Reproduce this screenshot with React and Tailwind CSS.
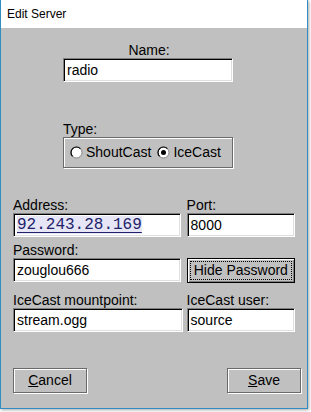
import React from 'react';

const sunken =
  'h-[24px] border border-t-[#808080] border-l-[#808080] border-b-white border-r-white bg-white shadow-[inset_1px_1px_0_#000,inset_-1px_-1px_0_#dfdfdf] px-[3px] flex items-center text-[14px] text-black';

const Label = ({ children, className = '' }) => (
  <div className={`h-4 leading-4 text-[14px] text-black ${className}`}>{children}</div>
);

const Radio = ({ checked }) => (
  <svg width="13" height="13" viewBox="0 0 13 13" className="shrink-0">
    <circle cx="6.5" cy="6.5" r="5.5" fill="#fff" stroke="#808080" strokeWidth="1" />
    <path d="M2.6 10.4 A5 5 0 0 1 10.4 2.6" fill="none" stroke="#000" strokeWidth="1.2" />
    {checked && <circle cx="6.5" cy="6.5" r="2.5" fill="#000" />}
  </svg>
);

const Button = ({ children, className = '' }) => (
  <button
    className={`h-[25px] w-[74px] border border-[#6a6a6a] shadow-[1px_1px_0_#fff,inset_1px_1px_0_#fff] bg-[#c0c0c0] text-[14px] text-black flex items-center justify-center ${className}`}
  >
    {children}
  </button>
);

export default function App() {
  return (
    <div className="w-[311px] h-[412px] bg-white font-['Liberation_Sans',Arial,sans-serif]">
      <div className="w-[308px] h-[409px] flex flex-col border-x border-b border-[#2f8dbf] shadow-[1px_1px_3px_rgba(0,0,0,0.35)]">
        {/* title bar */}
        <div className="h-[28px] bg-white flex items-center pl-[6px] text-[12px] text-black">
          Edit Server
        </div>

        <div className="flex-1 bg-[#c0c0c0] flex flex-col pt-[14px]">
          {/* name */}
          <div className="ml-[62px] w-[170px] flex flex-col">
            <Label className="text-center pl-[2px]">Name:</Label>
            <div className={sunken}>radio</div>
          </div>

          {/* type */}
          <div className="ml-[62px] w-[170px] mt-[39px] flex flex-col">
            <Label>Type:</Label>
            <div className="h-[31px] border border-[#6a6a6a] shadow-[1px_1px_0_#fff,inset_1px_1px_0_#fff] flex items-center pl-[6px] text-[14px] text-black">
              <Radio />
              <span className="ml-[3px]">ShoutCast</span>
              <span className="ml-[6px]"><Radio checked /></span>
              <span className="ml-[3px]">IceCast</span>
            </div>
          </div>

          {/* address / port */}
          <div className="px-[12px] mt-[29px] flex gap-[6px]">
            <div className="w-[170px] flex flex-col">
              <Label>Address:</Label>
              <div className={sunken}>
                <span className="bg-[#e6e6f6] text-[#22226a] underline underline-offset-[3px] font-['Liberation_Mono',monospace] text-[16px] leading-[18px]">
                  92.243.28.169
                </span>
              </div>
            </div>
            <div className="w-[110px] flex flex-col">
              <Label>Port:</Label>
              <div className={sunken}>8000</div>
            </div>
          </div>

          {/* password */}
          <div className="px-[12px] mt-[5px] flex flex-col">
            <Label>Password:</Label>
            <div className="flex gap-[6px] items-start">
              <div className={`w-[170px] ${sunken}`}>zouglou666</div>
              <button className="h-[25px] w-[110px] border border-black bg-[#c0c0c0] shadow-[inset_1px_1px_0_#fff,inset_-1px_-1px_0_#808080] outline-1 outline-dotted outline-black -outline-offset-4 text-[14px] text-black flex items-center justify-center">
                Hide Password
              </button>
            </div>
          </div>

          {/* icecast */}
          <div className="px-[12px] mt-[9px] flex gap-[4px]">
            <div className="w-[172px] flex flex-col">
              <Label>IceCast mountpoint:</Label>
              <div className={sunken}>stream.ogg</div>
            </div>
            <div className="w-[110px] flex flex-col">
              <Label>IceCast user:</Label>
              <div className={sunken}>source</div>
            </div>
          </div>

          {/* buttons */}
          <div className="pl-[12px] pr-[6px] mt-[36px] flex justify-between">
            <Button>
              <span><span className="underline">C</span>ancel</span>
            </Button>
            <Button>
              <span><span className="underline">S</span>ave</span>
            </Button>
          </div>
        </div>
      </div>
    </div>
  );
}
